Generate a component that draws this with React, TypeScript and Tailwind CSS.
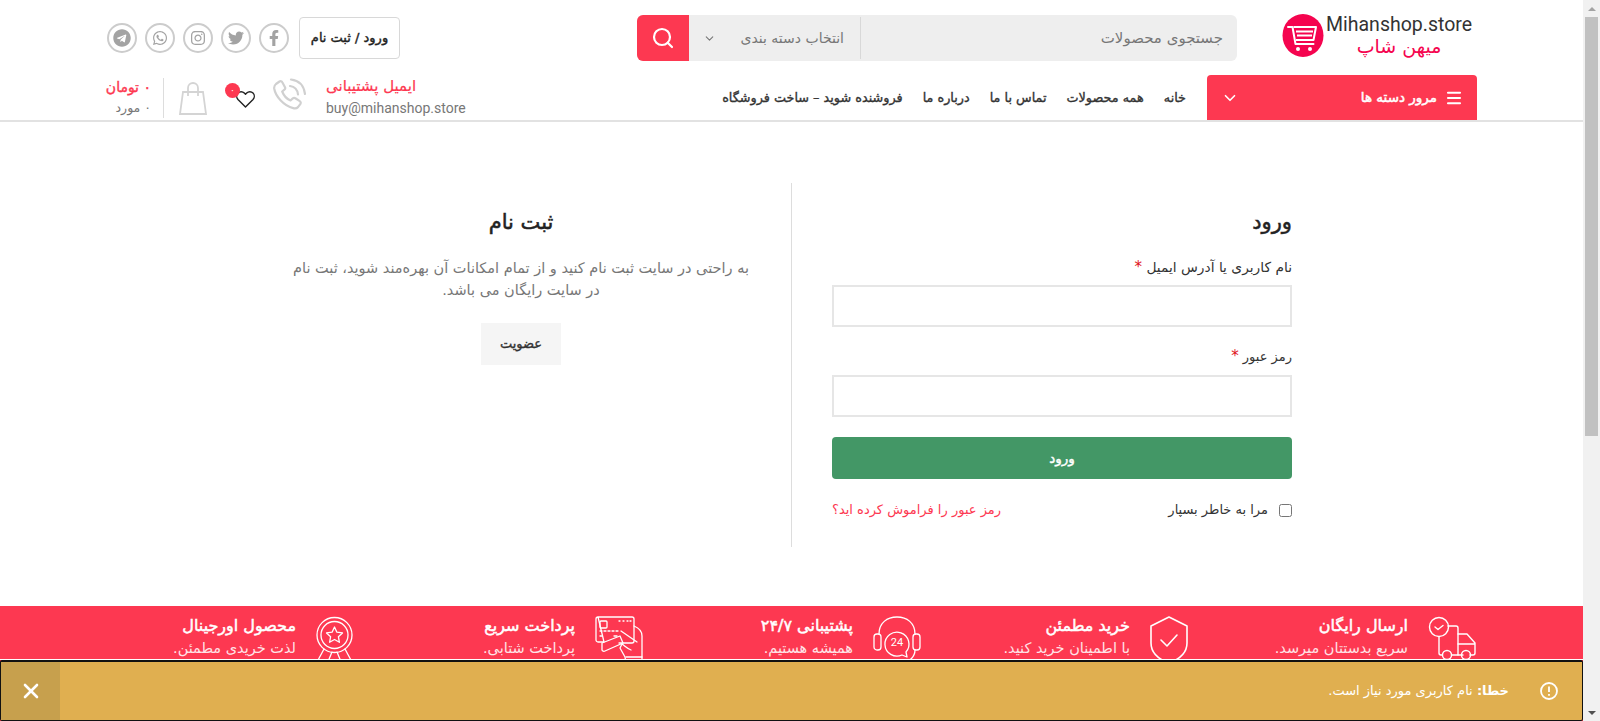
import { FaFacebookF, FaTwitter, FaInstagram, FaWhatsapp, FaTelegram } from "react-icons/fa";
import { Search, ChevronDown, Menu, X } from "lucide-react";
import type { ReactNode } from "react";

const s = { fill: "none", stroke: "#fff", strokeWidth: 1.6, strokeLinecap: "round" as const, strokeLinejoin: "round" as const };

function Social({ children }: { children: ReactNode }) {
  return (
    <a className="w-[30px] h-[30px] rounded-full border-2 border-[#ccc] flex items-center justify-center text-[#a3a3a3] text-[16px]">
      {children}
    </a>
  );
}

function LogoCart() {
  return (
    <svg width="42" height="43" viewBox="0 0 42 43" className="shrink-0">
      <ellipse cx="21" cy="21.500" rx="20.500" ry="21.500" fill="#f5044f" />
      <path d="M6 13h4.500l3 17h18" fill="none" stroke="#fff" strokeWidth="2" strokeLinecap="round" strokeLinejoin="round" />
      <path d="M11.500 13H34l-2.500 13H14" fill="none" stroke="#fff" strokeWidth="2" strokeLinejoin="round" />
      <path d="M14 17.500h17M15 21.500h15" stroke="#fff" strokeWidth="2" />
      <circle cx="16" cy="35" r="2" fill="#fff" />
      <circle cx="28" cy="35" r="2" fill="#fff" />
    </svg>
  );
}

function Truck() {
  return (
    <svg width="49" height="46" viewBox="0 0 49 46" {...s} strokeWidth={1.4}>
      <circle cx="11" cy="11" r="9.500" />
      <path d="M7 11l3 2.500 5-4" />
      <path d="M20 10h8a2 2 0 0 1 2 2v27H24M11 21v16a2 2 0 0 0 2 2h1" />
      <path d="M30 18h9l8 9v10a2 2 0 0 1-2 2h-3M30 28h17M35 39h-5" />
      <circle cx="19" cy="39" r="4.500" />
      <circle cx="38" cy="39" r="4.500" />
    </svg>
  );
}

function Shield() {
  return (
    <svg width="38" height="48" viewBox="0 0 38 48" {...s}>
      <path d="M19 1l18 9v17c0 9-7 16-18 20C8 43 1 36 1 27V10z" />
      <path d="M11 24l6 6 10-11" />
    </svg>
  );
}

function Headset() {
  return (
    <svg width="48" height="48" viewBox="0 0 48 48" {...s} strokeWidth={1.3}>
      <path d="M6 18C6 7 14 1 24 1s18 6 18 17" />
      <rect x="1" y="18" width="7" height="16" rx="3" />
      <rect x="40" y="18" width="7" height="16" rx="3" />
      <path d="M33 36l1 5-5-2a12 12 0 1 1 4-3z" />
      <path d="M42 34c0 7-6 12-12 13" />
      <text x="24" y="30" fontSize="11" fill="#fff" stroke="none" textAnchor="middle" fontFamily="Roboto, sans-serif">24</text>
    </svg>
  );
}

function Card() {
  return (
    <svg width="48" height="48" viewBox="0 0 48 48" {...s} strokeWidth={1.3}>
      <path d="M3 1h34a2 2 0 0 1 2 2v22a2 2 0 0 1-2 2H24M9 26H3a2 2 0 0 1-2-2V3a2 2 0 0 1 2-2z" />
      <rect x="5" y="5" width="7" height="7" rx="1" />
      <path d="M24 5h1M28 5h1M32 5h1M35 5h1M5 15h2M9 15h2M13 15h2M17 15h2M21 15h2M5 20h2M19 20h3" />
      <path d="M7 27l18-7 3 7-18 8a2 2 0 0 1-3-1z" />
      <path d="M26 15l16 11M39 10c5 2 8 5 8 10v27H31l-1-6-5-9 2-4c4 3 6 5 9 6" />
      <path d="M31 41h16" />
    </svg>
  );
}

function Medal() {
  return (
    <svg width="37" height="48" viewBox="0 0 37 48" {...s} strokeWidth={1.3}>
      <circle cx="18.500" cy="19" r="17.500" />
      <circle cx="18.500" cy="19" r="13.500" />
      <path d="M18.500 11l2.400 5.200 5.600.7-4.100 3.800 1 5.600-4.900-2.800-4.900 2.800 1-5.600-4.100-3.800 5.600-.7z" />
      <path d="M8 33L1 46l7-1 3 3 5-12M29 33l7 13-7-1-3 3-5-12" />
    </svg>
  );
}

function Feature({ w, icon, title, sub }: { w: string; icon: ReactNode; title: string; sub: string }) {
  return (
    <div className={`${w} flex items-start gap-[20px] shrink-0`}>
      <div className="shrink-0 mt-[10px]">{icon}</div>
      <div className="text-white pt-[8px]">
        <div className="text-[16px] leading-[24px] [-webkit-text-stroke:0.5px_#fff]">{title}</div>
        <div className="text-[14.500px] leading-[20px] text-[#ffe3e7]">{sub}</div>
      </div>
    </div>
  );
}

const nav = ["خانه", "همه محصولات", "تماس با ما", "درباره ما", "فروشنده شوید – ساخت فروشگاه"];

export default function App() {
  return (
    <div className="flex h-[721px] overflow-hidden bg-white font-['DejaVu_Sans','Noto_Sans',sans-serif]">
      <div dir="rtl" className="relative w-[1583px] shrink-0 overflow-hidden">
        <header className="border-b-2 border-[#e2e2e2]">
          <div className="flex items-start h-[75px] pr-[106px] pl-[107px]">
            <div className="flex items-center gap-[2px] mt-[14px] w-[195px] shrink-0 ml-[45px]" dir="ltr">
              <LogoCart />
              <div className="leading-none text-center -mt-[1px]">
                <div className="font-['Roboto',sans-serif] text-[19.500px] leading-[22px] text-[#333]">Mihanshop.store</div>
                <div className="text-[19px] leading-[20px] text-[#f5044f]" dir="rtl">میهن شاپ</div>
              </div>
            </div>
            <div className="flex w-[600px] h-[46px] mt-[15px] rounded-[6px] overflow-hidden bg-[#eeeeee] shrink-0">
              <div className="flex-1 flex items-center pr-[14px] text-[15px] text-[#777]">جستجوی محصولات</div>
              <div className="w-px bg-[#d8d8d8] my-[2px]" />
              <div className="w-[171px] flex items-center justify-between pr-[16px] pl-[14px] text-[14px] text-[#777]">
                <span>انتخاب دسته بندی</span>
                <ChevronDown size={13} className="text-[#777]" />
              </div>
              <div className="w-[52px] bg-[#fd3851] flex items-center justify-center">
                <Search size={24} className="text-white" strokeWidth={2.2} />
              </div>
            </div>
            <div className="mr-auto flex items-start" dir="rtl">
              <a className="mt-[17px] ml-[10px] w-[101px] h-[42px] border border-[#d8d8d8] rounded-[4px] flex items-center justify-center text-[13px] [-webkit-text-stroke:0.4px_#222] text-[#222]">
                ورود / ثبت نام
              </a>
              <div className="flex gap-[8px] mt-[23px]" dir="ltr">
                <Social><FaTelegram className="text-[18px]" /></Social>
                <Social><FaWhatsapp /></Social>
                <Social><FaInstagram /></Social>
                <Social><FaTwitter /></Social>
                <Social><FaFacebookF /></Social>
              </div>
            </div>
          </div>
          <div className="flex h-[45px] pr-[106px] pl-[107px]">
            <div className="w-[270px] bg-[#fd3851] rounded-t-[4px] flex items-center justify-between pr-[14px] pl-[14px] text-white text-[13.500px] [-webkit-text-stroke:0.5px_#fff] shrink-0">
              <span className="flex items-center gap-[8px]"><Menu size={18} strokeWidth={2.8} />مرور دسته ها</span>
              <ChevronDown size={18} strokeWidth={2.2} />
            </div>
            <nav className="flex items-center gap-[20px] mr-[21px] text-[12.800px] [-webkit-text-stroke:0.35px_#333] text-[#333]">
              {nav.map((n) => (<a key={n}>{n}</a>))}
            </nav>
            <div className="mr-auto flex items-stretch" dir="ltr">
              <div className="w-[56px] pr-[12px] flex flex-col items-end text-right mt-[1px]" dir="rtl">
                <div className="text-[14px] leading-[22px] [-webkit-text-stroke:0.4px_#fd3851] text-[#fd3851] w-full text-right whitespace-nowrap">۰ تومان</div>
                <div className="text-[12.500px] leading-[20px] text-[#777] w-full text-right whitespace-nowrap">۰ مورد</div>
              </div>
              <div className="w-px bg-[#dddddd] h-[40px] mt-[3px]" />
              <svg width="28" height="33" viewBox="0 0 28 33" className="ml-[15px] mt-[7px]" fill="none" stroke="#d4d4d4" strokeWidth="1.8">
                <path d="M4 10h20l3 22H1z" />
                <path d="M9 14V6a5 5 0 0 1 10 0v8" />
              </svg>
              <div className="relative ml-[18px] w-[29px] mt-[8px]">
                <svg width="19" height="18" viewBox="0 0 24 22" className="absolute left-[11px] top-[7px]" fill="none" stroke="#222" strokeWidth="1.8" strokeLinejoin="round">
                  <path d="M12 21L2.500 11.500a5.800 5.800 0 0 1 0-8 5.600 5.600 0 0 1 8 0L12 5l1.500-1.500a5.600 5.600 0 0 1 8 0 5.800 5.800 0 0 1 0 8z" />
                </svg>
                <span className="absolute left-0 top-0 w-[15px] h-[15px] rounded-full bg-[#fd3851] text-white text-[9px] leading-[15px] text-center">۰</span>
              </div>
              <svg width="33" height="33" viewBox="0 0 33 33" className="ml-[19px] mt-[3px]" fill="none" stroke="#d0d0d0" strokeWidth="2.200" strokeLinecap="round" strokeLinejoin="round">
                <path d="M3 6l3.500-2.500c1-.7 2.300-.3 2.800.7l2.700 5c.4.9.2 1.900-.6 2.500l-2.200 1.800c1.300 3.400 4.800 7.600 8.300 9l2.300-2.100c.7-.6 1.700-.7 2.500-.2l4.500 2.900c1 .6 1.200 2 .5 3l-2.300 3c-1.200 1.200-3 1.500-4.800 1C11 28 2.500 18.500 1.200 10.500 1 8.800 1.700 7 3 6z" />
                <path d="M17 8c4.500.6 7.500 4 8 8.500M18 1.500C26 2.500 31 8 32 16" />
              </svg>
              <div className="ml-[20px] text-left" dir="ltr">
                <div className="text-[15px] leading-[22px] text-[#fd3851] [-webkit-text-stroke:0.2px_#fd3851]" dir="rtl">ایمیل پشتیبانی</div>
                <div className="font-['Roboto',sans-serif] text-[14px] leading-[22px] text-[#777]">buy@mihanshop.store</div>
              </div>
            </div>
          </div>
        </header>

        <main className="flex mt-[61px] h-[364px] mr-[291px]">
          <section className="w-[501px] border-l border-[#dddddd] pl-[40px] shrink-0">
            <h2 className="text-[21px] [-webkit-text-stroke:0.5px_#222] text-[#222] leading-[30px] mt-[24px]">ورود</h2>
            <label className="block text-[13.800px] text-[#333] leading-[20px] mt-[20px] mb-[8px]">نام کاربری یا آدرس ایمیل <span className="text-[15px] text-[#e01020]">*</span></label>
            <input className="block w-full h-[42px] border-2 border-[#e6e6e6] bg-white" />
            <label className="block text-[13px] text-[#333] leading-[20px] mt-[19px] mb-[8px]">رمز عبور <span className="text-[15px] text-[#e01020]">*</span></label>
            <input className="block w-full h-[42px] border-2 border-[#e6e6e6] bg-white" />
            <button className="block w-full h-[42px] mt-[20px] bg-[#439766] rounded-[4px] text-white text-[13.500px] [-webkit-text-stroke:0.4px_#fff]">ورود</button>
            <div className="flex items-center justify-between mt-[21px] text-[13px] leading-[20px]">
              <label className="flex items-center gap-[11px] text-[#333]">
                <input type="checkbox" className="w-[13px] h-[13px] m-0" />
                مرا به خاطر بسپار
              </label>
              <a className="text-[#fd3851]">رمز عبور را فراموش کرده اید؟</a>
            </div>
          </section>
          <section className="w-[540px] text-center shrink-0">
            <h2 className="text-[21px] [-webkit-text-stroke:0.5px_#222] text-[#222] leading-[30px] mt-[24px]">ثبت نام</h2>
            <p className="w-[470px] mx-auto mt-[20px] text-[14.500px] leading-[22px] text-[#777]">
              به راحتی در سایت ثبت نام کنید و از تمام امکانات آن بهره‌مند شوید، ثبت نام در سایت رایگان می باشد.
            </p>
            <button className="w-[80px] h-[42px] mt-[22px] bg-[#f5f5f5] text-[13px] [-webkit-text-stroke:0.35px_#333] text-[#333]">عضویت</button>
          </section>
        </main>

        <div className="mt-[59px] bg-[#fd3851] h-[120px] pr-[106px] flex">
          <Feature w="w-[289px]" icon={<Truck />} title="ارسال رایگان" sub="سریع بدستتان میرسد." />
          <Feature w="w-[267px]" icon={<Shield />} title="خرید مطمئن" sub="با اطمینان خرید کنید." />
          <Feature w="w-[278px]" icon={<Headset />} title="پشتیبانی ۲۴/۷" sub="همیشه هستیم." />
          <Feature w="w-[290px]" icon={<Card />} title="پرداخت سریع" sub="پرداخت شتابی." />
          <Feature w="w-[250px]" icon={<Medal />} title="محصول اورجینال" sub="لذت خریدی مطمئن." />
        </div>

        <div className="absolute bottom-0 left-0 right-0 h-[62px] border-white border-t">
          <div className="h-[61px] border-t-2 border-x border-b border-[#111] bg-[#e0af50] rounded-[2px] flex items-center text-white">
            <svg width="18" height="18" viewBox="0 0 18 18" className="mr-[24px] ml-[31px]" fill="none" stroke="#fff" strokeWidth="1.8">
              <circle cx="9" cy="9" r="8" />
              <path d="M9 4.500v5.500M9 12v1.800" />
            </svg>
            <span className="text-[13px]"><b>خطا:</b> نام کاربری مورد نیاز است.</span>
            <div className="mr-auto w-[59px] h-full bg-[#c7a04d] flex items-center justify-center">
              <X size={24} strokeWidth={2.6} />
            </div>
          </div>
        </div>
      </div>

      <aside className="w-[17px] shrink-0 bg-[#f1f1f1] flex flex-col items-center">
        <div className="h-[17px] flex items-center justify-center">
          <span className="w-0 h-0 border-x-[4px] border-x-transparent border-b-[4px] border-b-[#a3a3a3]" />
        </div>
        <div className="w-[13px] h-[419px] bg-[#c1c1c1]" />
        <div className="mt-auto h-[17px] flex items-center justify-center">
          <span className="w-0 h-0 border-x-[4px] border-x-transparent border-t-[4px] border-t-[#505050]" />
        </div>
      </aside>
    </div>
  );
}
